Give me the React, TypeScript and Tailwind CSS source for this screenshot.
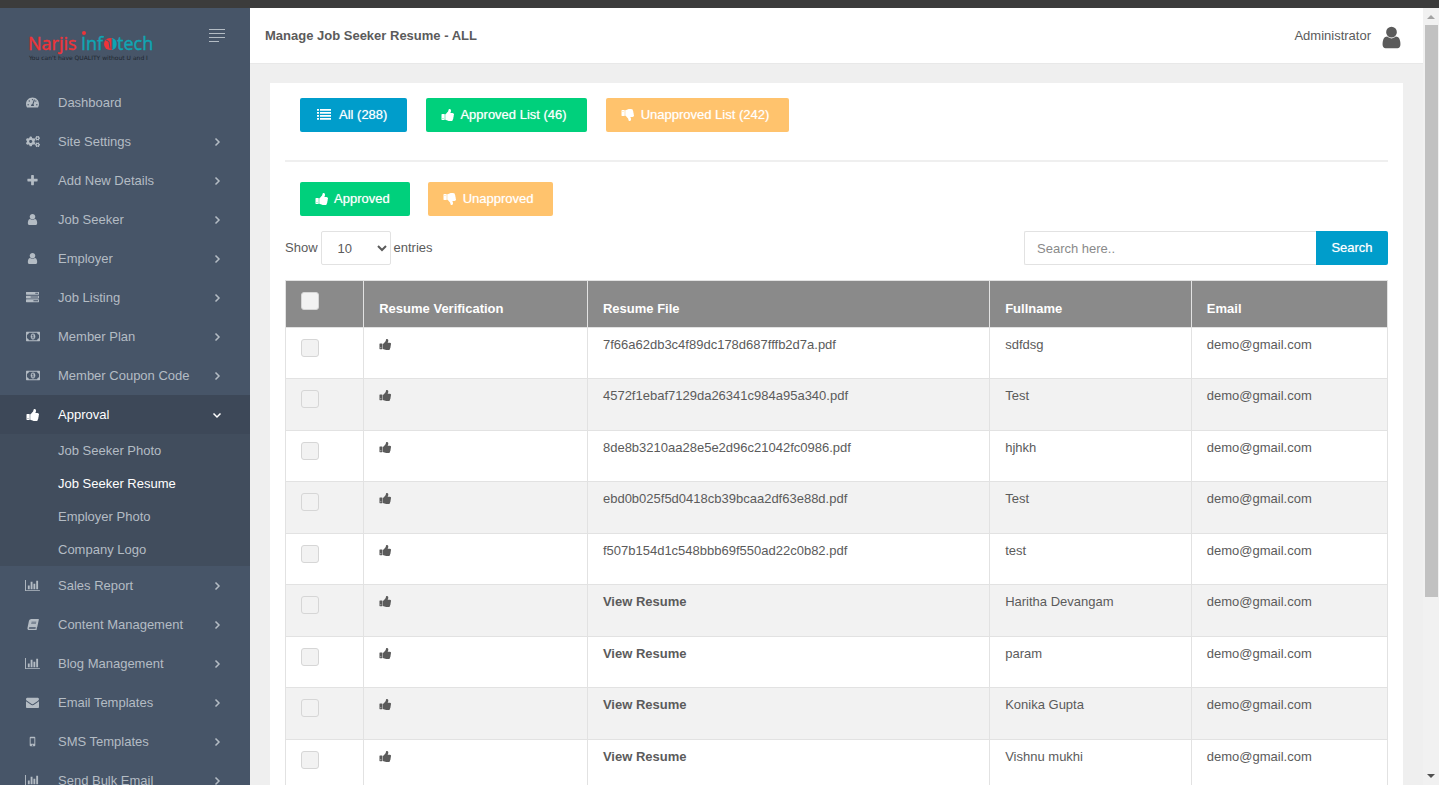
import { useState } from "react";
import type { ReactNode } from "react";
import { FaBook, FaCogs, FaTachometerAlt } from "react-icons/fa";
import clsx from "clsx";

const ICONS = {
  user: {
    w: 1792,
    d: "M1536 1399q0 109-62.5 187t-150.5 78h-854q-88 0-150.5-78t-62.5-187q0-85 8.5-160.5t31.5-152 58.5-131 94-89 134.5-34.5q131 128 313 128t313-128q76 0 134.5 34.5t94 89 58.5 131 31.5 152 8.5 160.5zm-256-887q0 159-112.5 271.5t-271.5 112.5-271.5-112.5-112.5-271.5 112.5-271.5 271.5-112.5 271.5 112.5 112.5 271.5z",
  },
  thumb: {
    w: 1792,
    d: "M320 1344q0-26-19-45t-45-19q-27 0-45.5 19t-18.5 45q0 27 18.5 45.5t45.5 18.5q26 0 45-18.5t19-45.5zm160-512v640q0 26-19 45t-45 19h-288q-26 0-45-19t-19-45v-640q0-26 19-45t45-19h288q26 0 45 19t19 45zm1184 0q0 86-55 149 15 44 15 76 3 76-43 137 17 56 0 117-15 57-54 94 9 112-49 181-64 76-197 78h-129q-66 0-144-15.5t-121.5-29-120.5-39.5q-123-43-158-44-26-1-45-19.5t-19-44.5v-641q0-25 18-43.5t43-20.5q24-2 76-59t101-121q68-87 101-120 18-18 31-48t17.5-48.5 13.5-60.5q7-39 12.5-61t19.5-52 34-50q19-19 45-19 46 0 82.5 10.5t60 26 40 40.5 24 45 12 50 5 45 .5 39q0 38-9.5 76t-19 60-27.5 56q-3 6-10 18t-11 22-8 24h277q78 0 135 57t57 135z",
  },
  chart: {
    w: 2048,
    d: "M640 896v512h-256v-512h256zm384-512v1024h-256v-1024h256zm1024 1152v128h-2048v-1536h128v1408h1920zm-640-896v768h-256v-768h256zm384-384v1152h-256v-1152h256z",
  },
  envelope: {
    w: 1792,
    d: "M1792 710v794q0 66-47 113t-113 47h-1472q-66 0-113-47t-47-113v-794q44 49 101 87 362 246 497 345 57 42 92.5 65.5t94.5 48 110 24.5h2q51 0 110-24.5t94.5-48 92.5-65.5q170-123 498-345 57-39 100-87zm0-294q0 79-49 151t-122 123q-376 261-468 325-10 7-42.5 31t-54 38.5-52 32.5-57.5 27-50 9h-2q-23 0-50-9t-57.5-27-52-32.5-54-38.5-42.5-31q-91-64-262-182.5t-205-142.5q-62-42-117-115.5t-55-136.5q0-78 41.5-130t118.5-52h1472q65 0 112.5 47t47.5 113z",
  },
  plus: {
    w: 1792,
    d: "M1600 736v192q0 40-28 68t-68 28h-416v416q0 40-28 68t-68 28h-192q-40 0-68-28t-28-68v-416h-416q-40 0-68-28t-28-68v-192q0-40 28-68t68-28h416v-416q0-40 28-68t68-28h192q40 0 68 28t28 68v416h416q40 0 68 28t28 68z",
  },
  tasks: {
    w: 1792,
    d: "M1024 1408h640v-128h-640v128zm-384-512h1024v-128h-1024v128zm640-512h384v-128h-384v128zm512 832v256q0 26-19 45t-45 19h-1664q-26 0-45-19t-19-45v-256q0-26 19-45t45-19h1664q26 0 45 19t19 45zm0-512v256q0 26-19 45t-45 19h-1664q-26 0-45-19t-19-45v-256q0-26 19-45t45-19h1664q26 0 45 19t19 45zm0-512v256q0 26-19 45t-45 19h-1664q-26 0-45-19t-19-45v-256q0-26 19-45t45-19h1664q26 0 45 19t19 45z",
  },
  money: {
    w: 1920,
    d: "M768 1152h384v-96h-128v-448h-114l-148 137 77 80q42-37 55-57h2v288h-128v96zm512-256q0 70-21 142t-59.5 134-101.5 101-138 39-138-39-101.5-101-59.5-134-21-142 21-142 59.5-134 101.5-101 138-39 138 39 101.5 101 59.5 134 21 142zm512 256v-512q-106 0-181-75t-75-181h-1152q0 106-75 181t-181 75v512q106 0 181 75t75 181h1152q0-106 75-181t181-75zm128-832v1152q0 26-19 45t-45 19h-1792q-26 0-45-19t-19-45v-1152q0-26 19-45t45-19h1792q26 0 45 19t19 45z",
  },
  list: {
    w: 1792,
    d: "M0 1280h256v224h-256zM0 896h256v224h-256zM0 512h256v224h-256zM0 128h256v224h-256zM384 1280h1408v224h-1408zM384 896h1408v224h-1408zM384 512h1408v224h-1408zM384 128h1408v224h-1408z",
  },
  mobile: {
    w: 1792,
    d: "M640 256h512q128 0 128 128v1024q0 128-128 128h-512q-128 0-128-128v-1024q0-128 128-128zm0 192v768h512v-768zm176 896v128h160v-128z",
  },
};

type IconName = keyof typeof ICONS;

function Icon({ name, className }: { name: IconName; className?: string }) {
  const { w, d } = ICONS[name];
  return (
    <svg viewBox={`0 0 ${w} 1792`} fill="currentColor" fillRule="evenodd" className={clsx("shrink-0", className)} aria-hidden>
      <path d={d} />
    </svg>
  );
}

function Chevron({ open }: { open?: boolean }) {
  return (
    <svg
      viewBox="0 0 10 10"
      className={clsx("mt-px size-2.5 shrink-0", open && "rotate-90")}
      fill="none"
      stroke="currentColor"
      strokeWidth="1.5"
      aria-hidden
    >
      <path d="M3.5 1.5L7 5 3.5 8.5" />
    </svg>
  );
}

interface MenuItem {
  label: string;
  icon: ReactNode;
  leaf?: boolean;
  children?: string[];
}

const small = "h-[13px] w-[13px]";

const MENU: MenuItem[] = [
  { label: "Dashboard", icon: <FaTachometerAlt className={small} />, leaf: true },
  { label: "Site Settings", icon: <FaCogs className="h-[13px] w-[14px]" /> },
  { label: "Add New Details", icon: <Icon name="plus" className={small} /> },
  { label: "Job Seeker", icon: <Icon name="user" className={small} /> },
  { label: "Employer", icon: <Icon name="user" className={small} /> },
  { label: "Job Listing", icon: <Icon name="tasks" className={small} /> },
  { label: "Member Plan", icon: <Icon name="money" className="h-[13px] w-[14px]" /> },
  { label: "Member Coupon Code", icon: <Icon name="money" className="h-[13px] w-[14px]" /> },
  {
    label: "Approval",
    icon: <Icon name="thumb" className="size-3.5" />,
    children: ["Job Seeker Photo", "Job Seeker Resume", "Employer Photo", "Company Logo"],
  },
  { label: "Sales Report", icon: <Icon name="chart" className="h-[13px] w-[15px]" /> },
  { label: "Content Management", icon: <FaBook className="h-[11px] w-[12px] -skew-x-12" /> },
  { label: "Blog Management", icon: <Icon name="chart" className="h-[13px] w-[15px]" /> },
  { label: "Email Templates", icon: <Icon name="envelope" className={small} /> },
  { label: "SMS Templates", icon: <Icon name="mobile" className={small} /> },
  { label: "Send Bulk Email", icon: <Icon name="chart" className="h-[13px] w-[15px]" /> },
];

interface Resume {
  file: string | null;
  fullname: string;
  email: string;
}

const RESUMES: Resume[] = [
  { file: "7f66a62db3c4f89dc178d687fffb2d7a.pdf", fullname: "sdfdsg", email: "demo@gmail.com" },
  { file: "4572f1ebaf7129da26341c984a95a340.pdf", fullname: "Test", email: "demo@gmail.com" },
  { file: "8de8b3210aa28e5e2d96c21042fc0986.pdf", fullname: "hjhkh", email: "demo@gmail.com" },
  { file: "ebd0b025f5d0418cb39bcaa2df63e88d.pdf", fullname: "Test", email: "demo@gmail.com" },
  { file: "f507b154d1c548bbb69f550ad22c0b82.pdf", fullname: "test", email: "demo@gmail.com" },
  { file: null, fullname: "Haritha Devangam", email: "demo@gmail.com" },
  { file: null, fullname: "param", email: "demo@gmail.com" },
  { file: null, fullname: "Konika Gupta", email: "demo@gmail.com" },
  { file: null, fullname: "Vishnu mukhi", email: "demo@gmail.com" },
];

function Logo() {
  return (
    <svg viewBox="0 0 130 36" className="h-9 w-[130px]" role="img" aria-label="Narjis Infotech">
      <g fontFamily="Open Sans, Noto Sans, sans-serif" fontSize="18" strokeWidth="0.4">
        <text x="0" y="22" fill="#ee3439" stroke="#ee3439">Narjis</text>
        <text x="53" y="22" fill="#0fa5b3" stroke="#0fa5b3">Inf</text>
        <text x="89" y="22" fill="#0fa5b3" stroke="#0fa5b3">tech</text>
      </g>
      <circle cx="56" cy="5" r="2" fill="#ee3439" />
      <circle cx="82" cy="16" r="6" fill="#ee3439" />
      <path d="M84 10a6.2 6.2 0 0 1 0 12z" fill="#0fa5b3" />
      <path d="M78 12l3 1.5 1 7M84 11v10" stroke="#475568" strokeWidth="1" fill="none" />
      <text x="1" y="32" fill="#20262e" fontFamily="DejaVu Sans, sans-serif" fontSize="6">
        You can't have QUALITY without U and I
      </text>
    </svg>
  );
}

function Sidebar() {
  return (
    <aside className="w-[250px] shrink-0 overflow-hidden bg-[#475568] text-[#b4bcc4]">
      <div className="flex h-[75px] items-start justify-between pt-5 pr-[25px] pl-7">
        <Logo />
        <button type="button" aria-label="Toggle menu" className="flex flex-col gap-[3px] pt-px">
          <span className="h-px w-4 bg-current" />
          <span className="h-px w-4 bg-current" />
          <span className="h-px w-4 bg-current" />
          <span className="h-px w-2.5 bg-current" />
        </button>
      </div>
      <nav>
        <ul>
          {MENU.map((item) => (
            <li key={item.label}>
              <a
                href="#"
                className={clsx(
                  "flex h-[39px] items-center pr-7 pl-6",
                  item.children && "bg-[#3d4858] text-white"
                )}
              >
                <span className="mr-[17px] flex w-[17px] justify-center">{item.icon}</span>
                <span className="flex-1">{item.label}</span>
                {!item.leaf && <Chevron open={!!item.children} />}
              </a>
              {item.children && (
                <ul className="bg-[#414d5d]">
                  {item.children.map((child) => (
                    <li key={child}>
                      <a
                        href="#"
                        className={clsx(
                          "flex h-[33px] items-center pl-[58px]",
                          child === "Job Seeker Resume" && "text-white"
                        )}
                      >
                        {child}
                      </a>
                    </li>
                  ))}
                </ul>
              )}
            </li>
          ))}
        </ul>
      </nav>
    </aside>
  );
}

function Checkbox({ label, checked, onChange }: { label: string; checked: boolean; onChange: () => void }) {
  return (
    <input
      type="checkbox"
      aria-label={label}
      checked={checked}
      onChange={onChange}
      className="block size-[18px] appearance-none rounded-[3px] border border-[#d6d6d6] bg-[#f2f2f2] checked:bg-[#009dcb]"
    />
  );
}

// Page scroll track on the right edge of the window
function ScrollTrack() {
  return (
    <div className="flex w-4 shrink-0 flex-col items-center bg-[#f1f1f1] pt-[7px] pb-[7px]" aria-hidden>
      <span className="h-0 w-0 border-x-4 border-b-4 border-x-transparent border-b-[#a3a3a3]" />
      <span className="mt-1.5 h-[572px] w-[13px] bg-[#c1c1c1]" />
      <span className="mt-auto h-0 w-0 border-x-4 border-t-4 border-x-transparent border-t-[#505050]" />
    </div>
  );
}

export default function App() {
  const [selected, setSelected] = useState<number[]>([]);
  const [search, setSearch] = useState("");

  const allSelected = selected.length === RESUMES.length;

  const toggleAll = () => setSelected(allSelected ? [] : RESUMES.map((_, i) => i));
  const toggle = (i: number) =>
    setSelected((prev) => (prev.includes(i) ? prev.filter((x) => x !== i) : [...prev, i]));

  const btn =
    "flex h-[34px] items-center rounded-xs pr-5 font-medium text-white [text-shadow:0_0_1px_#ffffff99]";

  return (
    <div className="flex h-screen flex-col overflow-hidden bg-[#efefef] font-['Liberation_Sans',Arial,sans-serif] text-[13px] leading-[18px] text-[#5b5b5b]">
      <div className="h-2 shrink-0 bg-[#3c3c3c]" />
      <div className="flex min-h-0 flex-1">
        <Sidebar />

        <div className="min-w-0 flex-1 overflow-hidden">
          <header className="flex h-14 items-center justify-between border-b border-[#e8e8e8] bg-white pr-[18px] pl-[15px]">
            <h1 className="font-bold">Manage Job Seeker Resume - ALL</h1>
            <a href="#" className="flex items-center gap-[7px]">
              Administrator
              <Icon name="user" className="mt-1 h-[25px] w-[27px]" />
            </a>
          </header>

          <main className="px-5 pt-[19px]">
            <div className="bg-white p-[15px]">
              <div className="flex gap-[19px] pl-[15px]">
                <a href="#" className={clsx(btn, "gap-2 bg-[#009dcb] pl-[17px]")}>
                  <Icon name="list" className="size-3.5" />
                  All (288)
                </a>
                <a href="#" className={clsx(btn, "gap-[5px] bg-[#00d07c] pl-[15px]")}>
                  <Icon name="thumb" className="size-3.5" />
                  Approved List (46)
                </a>
                <a href="#" className={clsx(btn, "gap-[6px] bg-[#ffc36d] pl-[15px]")}>
                  <Icon name="thumb" className="size-3.5 -scale-y-100" />
                  Unapproved List (242)
                </a>
              </div>

              <hr className="mt-7 mb-5 border-t-2 border-[#efefef]" />

              <div className="flex gap-[18px] pl-[15px]">
                <button type="button" className={clsx(btn, "gap-[5px] bg-[#00d07c] pl-[15px]")}>
                  <Icon name="thumb" className="size-3.5" />
                  Approved
                </button>
                <button type="button" className={clsx(btn, "gap-[6px] bg-[#ffc36d] pl-[15px]")}>
                  <Icon name="thumb" className="size-3.5 -scale-y-100" />
                  Unapproved
                </button>
              </div>

              <div className="mt-[15px] flex items-center justify-between">
                <label className="flex items-center gap-[3px]">
                  Show
                  <select
                    defaultValue="10"
                    className="h-[34px] w-[70px] rounded-xs border border-[#e2e2e2] bg-white px-3"
                  >
                    <option>10</option>
                    <option>25</option>
                    <option>50</option>
                    <option>100</option>
                  </select>
                  entries
                </label>
                <form className="flex" onSubmit={(e) => e.preventDefault()}>
                  <input
                    type="text"
                    aria-label="Search"
                    placeholder="Search here.."
                    value={search}
                    onChange={(e) => setSearch(e.target.value)}
                    className="h-[34px] w-[292px] rounded-l-xs border border-r-0 border-[#e2e2e2] px-3 placeholder:text-[#8a8a8a]"
                  />
                  <button
                    type="submit"
                    className="h-[34px] w-[72px] rounded-r-xs bg-[#009dcb] font-medium text-white [text-shadow:0_0_1px_#ffffff99]"
                  >
                    Search
                  </button>
                </form>
              </div>

              <table className="mt-[15px] w-full table-fixed border-collapse text-left">
                <colgroup>
                  <col className="w-[7.1%]" />
                  <col className="w-[20.3%]" />
                  <col className="w-[36.5%]" />
                  <col className="w-[18.3%]" />
                  <col className="w-[17.8%]" />
                </colgroup>
                <thead>
                  <tr className="h-[47px] bg-[#8a8a8a] align-bottom text-white *:border *:border-[#e2e2e2] *:px-[15px] *:pb-[9px]">
                    <th className="pt-[11px] align-top">
                      <Checkbox label="Select all" checked={allSelected} onChange={toggleAll} />
                    </th>
                    <th>Resume Verification</th>
                    <th>Resume File</th>
                    <th>Fullname</th>
                    <th>Email</th>
                  </tr>
                </thead>
                <tbody>
                  {RESUMES.map((resume, i) => (
                    <tr
                      key={i}
                      className="align-top odd:h-[51px] even:h-[52px] even:bg-[#f2f2f2] *:border *:border-[#e2e2e2] *:px-[15px] *:pt-2"
                    >
                      <td>
                        <div className="pt-[3px]">
                          <Checkbox
                            label={`Select ${resume.fullname}`}
                            checked={selected.includes(i)}
                            onChange={() => toggle(i)}
                          />
                        </div>
                      </td>
                      <td>
                        <Icon name="thumb" className="mt-0.5 h-[13px] w-[13px]" />
                      </td>
                      <td>{resume.file ?? <a href="#" className="font-bold">View Resume</a>}</td>
                      <td>{resume.fullname}</td>
                      <td>{resume.email}</td>
                    </tr>
                  ))}
                </tbody>
              </table>
            </div>
          </main>
        </div>

        <ScrollTrack />
      </div>
    </div>
  );
}
